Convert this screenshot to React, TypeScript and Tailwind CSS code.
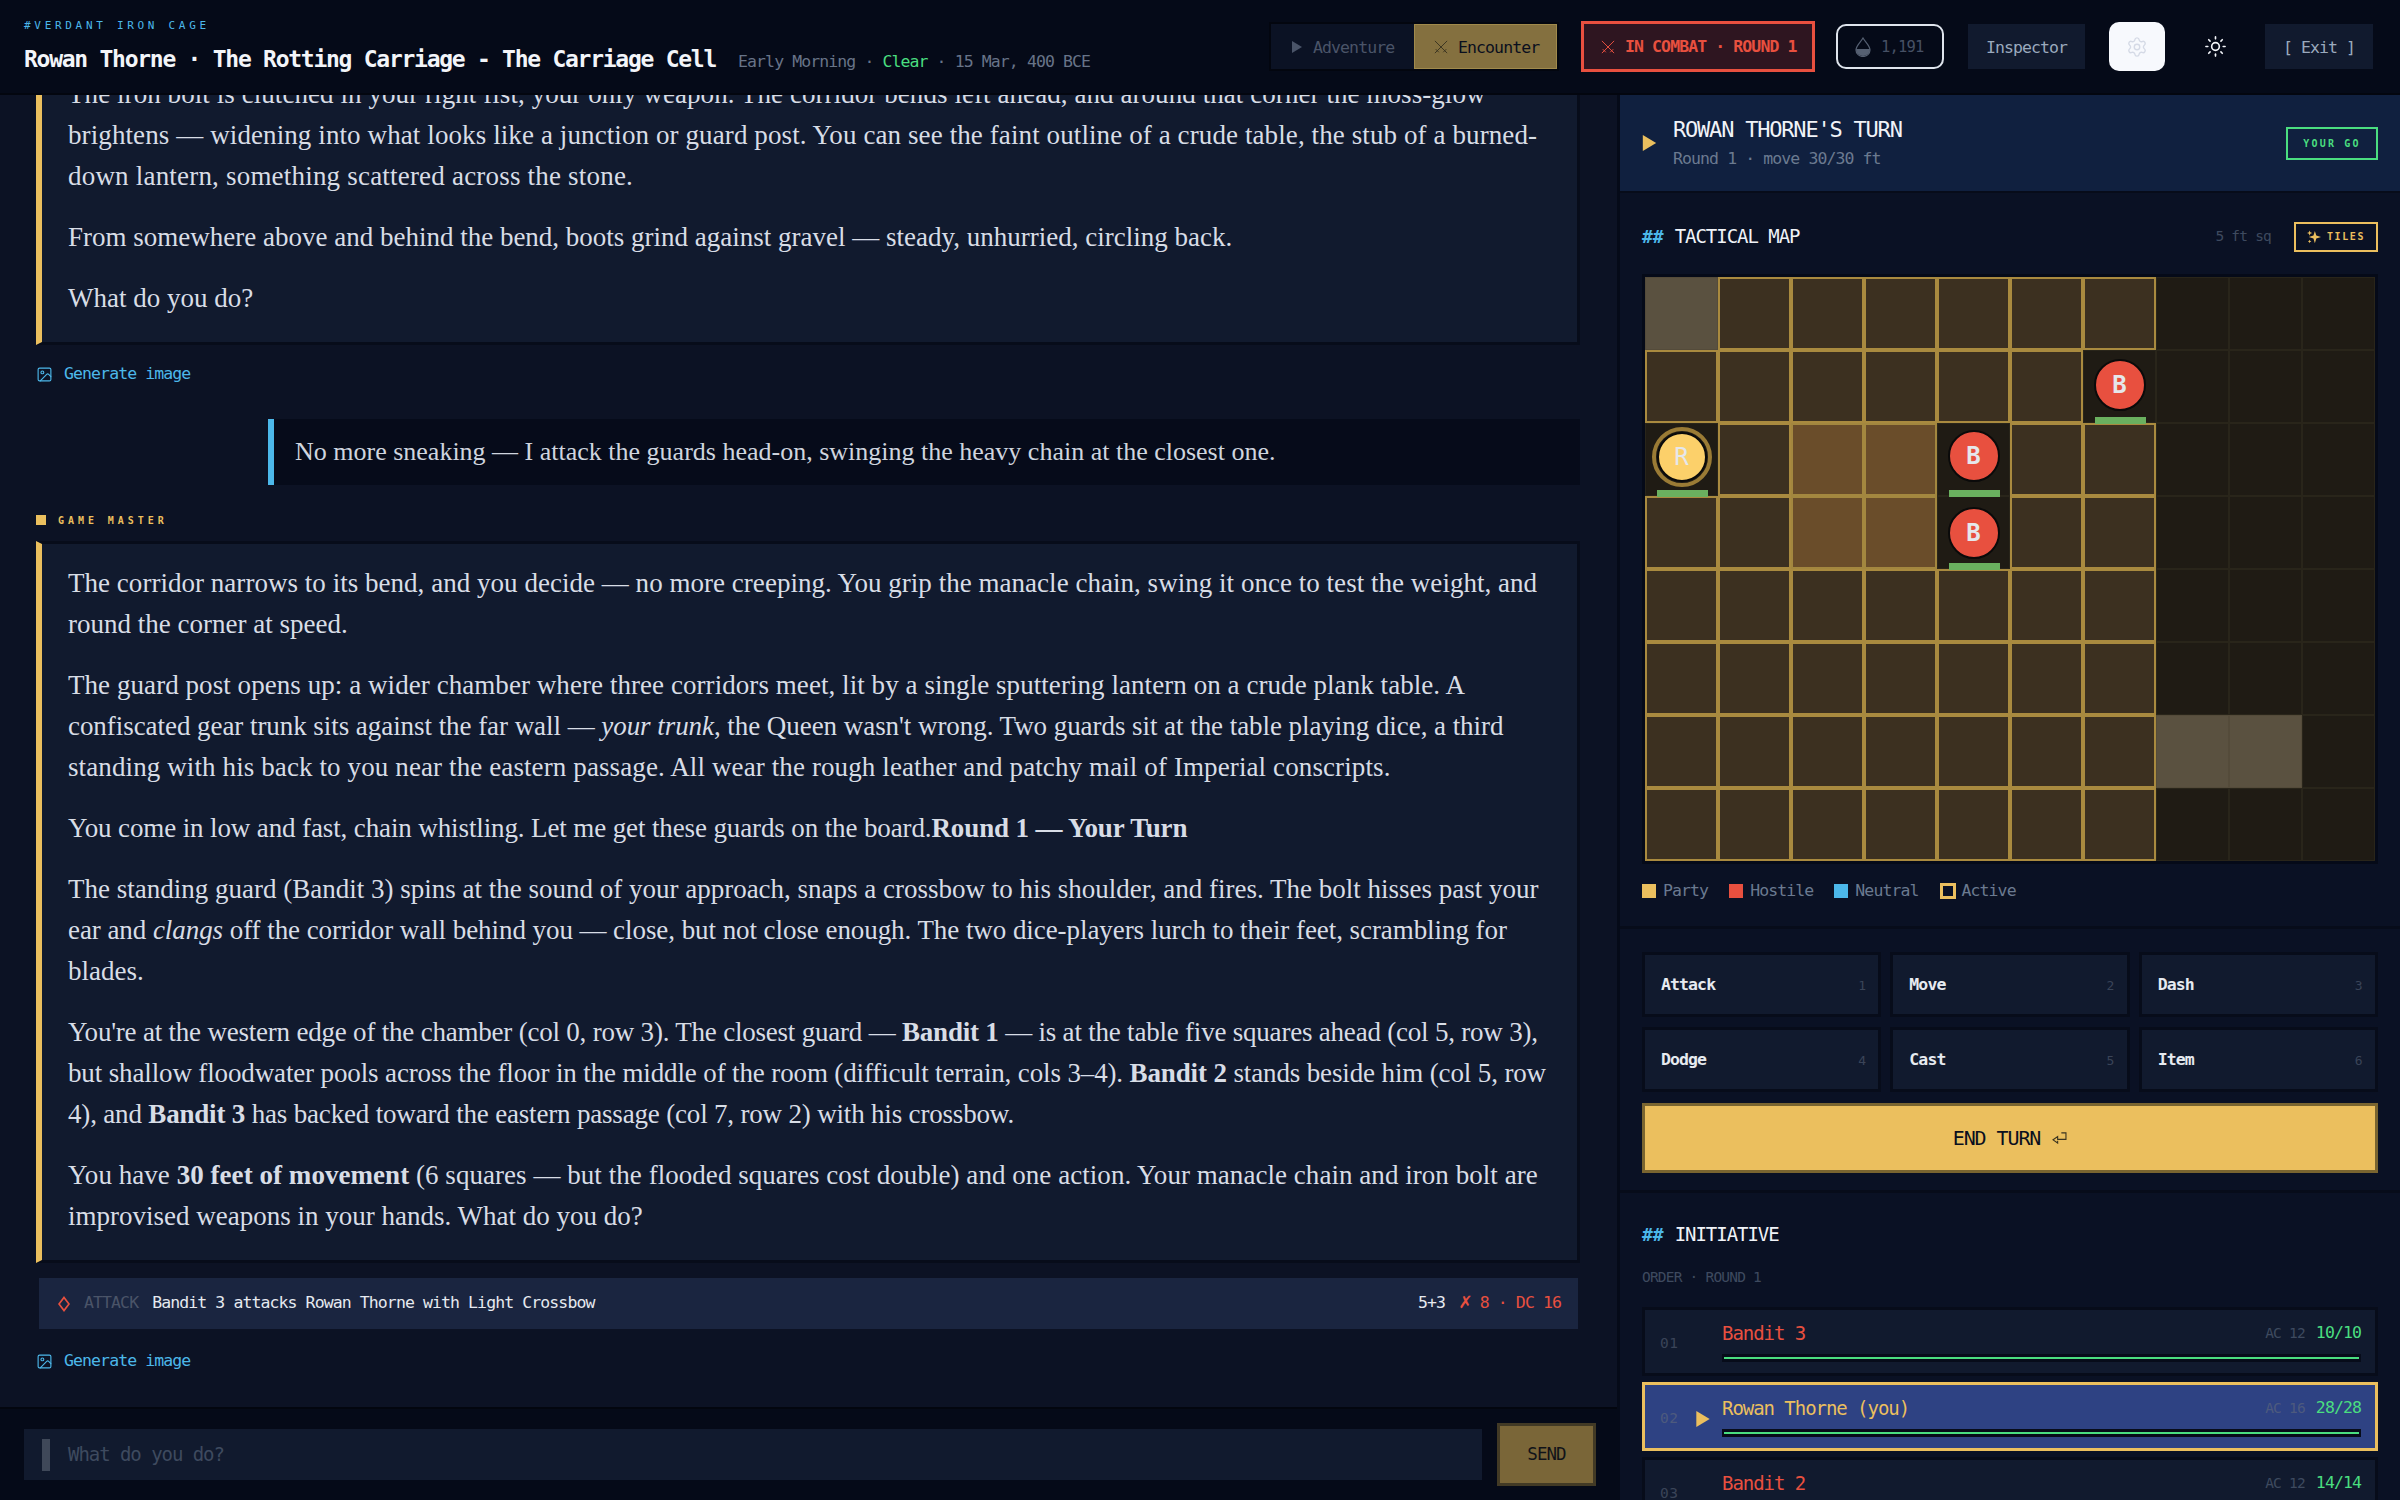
import { Settings, Sun, Image as ImageIcon } from "lucide-react";

const MONO = "[font-family:'DejaVu_Sans_Mono','Liberation_Mono',monospace]";

function Tri({ className }: { className: string }) {
  return (
    <svg viewBox="0 0 10 12" className={className} fill="currentColor">
      <path d="M0 0 L10 6 L0 12 Z" />
    </svg>
  );
}

function CrossedBlades({ className }: { className: string }) {
  return (
    <svg viewBox="0 0 16 16" className={className} fill="none" stroke="currentColor" strokeWidth="1.1">
      <path d="M1 1 L15 15 M15 1 L1 15 M2 10.5 L5.5 14 M14 10.5 L10.5 14" />
    </svg>
  );
}

function GenerateImage() {
  return (
    <button className="flex items-center gap-[11px] text-[#4cb8ea] text-[16.5px] tracking-[-0.055em] leading-[20px] self-start">
      <ImageIcon size={17} strokeWidth={1.6} />
      <span>Generate image</span>
    </button>
  );
}

function Header() {
  return (
    <header className="h-[95px] shrink-0 bg-[#050a18] border-b-[2px] border-[#03060f] flex items-center justify-between pl-[24px] pr-[27px]">
      <div className="flex flex-col pt-[6px]">
        <div className="text-[11px] leading-[14px] tracking-[3.7px] text-[#4cb8ea] mb-[12px] mt-[-5px]">#VERDANT IRON CAGE</div>
        <div className="flex items-baseline gap-[22px]">
          <span className="text-[23px] tracking-[-0.055em] leading-[28px] font-bold text-[#f3f5f9]">Rowan Thorne · The Rotting Carriage - The Carriage Cell</span>
          <span className="text-[16.5px] tracking-[-0.055em] text-[#687488]">
            Early Morning · <span className="text-[#4ade80]">Clear</span> · 15 Mar, 400 BCE
          </span>
        </div>
      </div>
      <div className="flex items-center">
        <div className="flex h-[49px] w-[290px] border-[2px] border-[#03060f] bg-[#03060f]">
          <div className="w-[143px] bg-[#0b1224] text-[#4a5468] text-[16.5px] tracking-[-0.055em] flex items-center pl-[21px] gap-[11px]">
            <Tri className="w-[10px] h-[12px]" />
            <span className="pt-[3px]">Adventure</span>
          </div>
          <div className="w-[143px] bg-[#84703f] border border-[#a08a4c] text-[#0a0f1e] text-[16.5px] tracking-[-0.055em] flex items-center pl-[19px] gap-[10px]">
            <CrossedBlades className="w-[14px] h-[14px] text-[#3a3420]" />
            <span className="pt-[3px]">Encounter</span>
          </div>
        </div>
        <div className="ml-[22px] h-[51px] w-[234px] border-[3px] border-[#e8503f] bg-[#2e1520] text-[#e8503f] text-[16.5px] tracking-[-0.055em] font-bold flex items-center pl-[17px] gap-[10px]">
          <CrossedBlades className="w-[14px] h-[14px]" />
          <span className="pt-[2px]">IN COMBAT · ROUND 1</span>
        </div>
        <div className="ml-[21px] h-[45px] w-[108px] border-[2px] border-[#dfe4ec] rounded-[10px] flex items-center pl-[17px] gap-[10px] text-[#465064] text-[15.5px] tracking-[-0.055em]">
          <svg viewBox="0 0 16 20" className="w-[16px] h-[20px]">
            <path d="M8 1 C11 6 15 9 15 13 A7 6.5 0 0 1 1 13 C1 9 5 6 8 1 Z" fill="none" stroke="#566072" strokeWidth="1.2" />
            <path d="M1 12 H15 A7 7 0 0 1 1 12 Z" fill="#566072" />
          </svg>
          <span className="pt-[2px]">1,191</span>
        </div>
        <div className="ml-[24px] h-[45px] w-[117px] pt-[3px] bg-[#111a2e] text-[#9aa9bd] text-[16.5px] tracking-[-0.055em] flex items-center justify-center">Inspector</div>
        <div className="ml-[24px] h-[49px] w-[56px] bg-[#f7f9fd] rounded-[10px] flex items-center justify-center">
          <Settings size={22} strokeWidth={1.5} className="text-[#d5dae6]" />
        </div>
        <div className="ml-[38px] w-[24px] flex items-center justify-center">
          <Sun size={23} strokeWidth={1.7} className="text-[#f3f5f9]" />
        </div>
        <div className="ml-[38px] h-[45px] w-[108px] pt-[3px] bg-[#111a2e] text-[#9aa9bd] text-[16.5px] tracking-[-0.055em] flex items-center justify-center">[ Exit ]</div>
      </div>
    </header>
  );
}

function P({ children }: { children: React.ReactNode }) {
  return <p className="mb-[20px] last:mb-0">{children}</p>;
}

function GmCard({ children }: { children: React.ReactNode }) {
  return (
    <div className="shrink-0 [font-family:'Liberation_Serif',serif] text-[27px] leading-[41px] w-[1544px] bg-[#111a2e] border-l-[6px] border-l-[#ebbf5e] border-y-[3px] border-r-[3px] border-y-[#070c1a] border-r-[#070c1a] pl-[26px] pr-[10px] pt-[19px] pb-[23px] text-[#d8dde6]">
      {children}
    </div>
  );
}

function Chat() {
  return (
    <div className="flex-1 min-h-0 overflow-hidden flex flex-col justify-end pl-[36px] pr-[37px] bg-[#0c1224] pb-[36px]">
      <GmCard>
        <P>
          <span className="tracking-[0.07px]">The iron bolt is clutched in your right fist, your only weapon. The corridor bends left ahead, and around that corner the moss-glow</span><br />
          <span className="tracking-[0.1px]">brightens — widening into what looks like a junction or guard post. You can see the faint outline of a crude table, the stub of a burned-</span><br />
          <span className="tracking-[0.2px]">down lantern, something scattered across the stone.</span>
        </P>
        <P>From somewhere above and behind the bend, boots grind against gravel — steady, unhurried, circling back.</P>
        <P>What do you do?</P>
      </GmCard>
      <div className="shrink-0 mt-[19px] h-[20px] flex">
        <GenerateImage />
      </div>
      <div className="shrink-0 [font-family:'Liberation_Serif',serif] text-[26px] leading-[41px] mt-[35px] ml-[232px] h-[66px] pb-[2px] bg-[#060b1a] border-l-[6px] border-l-[#4cb8ea] pl-[21px] flex items-center text-[#cfd5df]">
        No more sneaking — I attack the guards head-on, swinging the heavy chain at the closest one.
      </div>
      <div className="shrink-0 mt-[29px] h-[12px] flex items-center gap-[12px]">
        <span className="w-[10px] h-[10px] bg-[#ebbf5e]" />
        <span className="text-[10px] font-bold tracking-[3.95px] text-[#ebbf5e]">GAME MASTER</span>
      </div>
      <div className="shrink-0 h-[15px]" />
      <GmCard>
        <P>
          <span className="tracking-[0.03px]">The corridor narrows to its bend, and you decide — no more creeping. You grip the manacle chain, swing it once to test the weight, and</span><br />
          round the corner at speed.
        </P>
        <P>
          <span className="tracking-[0.06px]">The guard post opens up: a wider chamber where three corridors meet, lit by a single sputtering lantern on a crude plank table. A</span><br />
          <span className="tracking-[-0.055px]">confiscated gear trunk sits against the far wall — <em>your trunk</em>, the Queen wasn't wrong. Two guards sit at the table playing dice, a third</span><br />
          <span className="tracking-[0.11px]">standing with his back to you near the eastern passage. All wear the rough leather and patchy mail of Imperial conscripts.</span>
        </P>
        <P>
          <span className="tracking-[-0.12px]">You come in low and fast, chain whistling. Let me get these guards on the board.<b>Round 1 — Your Turn</b></span>
        </P>
        <P>
          The standing guard (Bandit 3) spins at the sound of your approach, snaps a crossbow to his shoulder, and fires. The bolt hisses past your<br />
          <span className="tracking-[-0.065px]">ear and <em>clangs</em> off the corridor wall behind you — close, but not close enough. The two dice-players lurch to their feet, scrambling for</span><br />
          blades.
        </P>
        <P>
          <span className="tracking-[-0.21px]">You're at the western edge of the chamber (col 0, row 3). The closest guard — <b>Bandit 1</b> — is at the table five squares ahead (col 5, row 3),</span><br />
          <span className="tracking-[-0.135px]">but shallow floodwater pools across the floor in the middle of the room (difficult terrain, cols 3–4). <b>Bandit 2</b> stands beside him (col 5, row</span><br />
          <span className="tracking-[-0.18px]">4), and <b>Bandit 3</b> has backed toward the eastern passage (col 7, row 2) with his crossbow.</span>
        </P>
        <P>
          <span className="tracking-[0.045px]">You have <b>30 feet of movement</b> (6 squares — but the flooded squares cost double) and one action. Your manacle chain and iron bolt are</span><br />
          improvised weapons in your hands. What do you do?
        </P>
      </GmCard>
      <div className="shrink-0 mt-[15px] ml-[3px] w-[1539px] h-[51px] bg-[#1a2540] flex items-center pl-[19px] pr-[17px] text-[16.5px] tracking-[-0.055em]">
        <svg viewBox="0 0 12 16" className="w-[12px] h-[16px] mr-[14px]" fill="none" stroke="#e8503f" strokeWidth="1.7">
          <path d="M6 1.5 L11 8 L6 14.5 L1 8 Z" />
        </svg>
        <span className="text-[#4a5468] mr-[14px]">ATTACK</span>
        <span className="text-[#e6eaf0]">Bandit 3 attacks Rowan Thorne with Light Crossbow</span>
        <span className="ml-auto text-[#e6eaf0]">5+3</span>
        <span className="ml-[14px] text-[#e8503f]"><span className="text-[21px] leading-[20px]">✗</span> 8 · DC 16</span>
      </div>
      <div className="shrink-0 mt-[22px] h-[20px] flex">
        <GenerateImage />
      </div>
    </div>
  );
}

function InputBar() {
  return (
    <div className="h-[93px] shrink-0 bg-[#050a18] border-t-[2px] border-[#03060f] flex items-center pl-[24px] pr-[21px]">
      <div className="w-[1458px] h-[51px] bg-[#111a2e] flex items-center pl-[18px] gap-[18px]">
        <span className="w-[8px] h-[32px] bg-[#3f4859]" />
        <span className="text-[19px] tracking-[-0.055em] text-[#3e4a5f]">What do you do?</span>
      </div>
      <button className="ml-auto w-[99px] h-[63px] bg-[#7a6638] border-[3px] border-[#423a25] text-[#111319] text-[17.5px] tracking-[-0.055em] flex items-center justify-center">SEND</button>
    </div>
  );
}

const TOKENS: Record<string, { letter: string; party?: boolean; offset: string }> = {
  "1-6": { letter: "B", offset: "pb-[4px]" },
  "2-0": { letter: "R", party: true, offset: "pb-[6px]" },
  "2-4": { letter: "B", offset: "pb-[8px]" },
  "3-4": { letter: "B", offset: "pb-0" },
};

function Cell({ r, c }: { r: number; c: number }) {
  const key = `${r}-${c}`;
  const token = TOKENS[key];
  const obstacle = key === "0-0" || key === "6-7" || key === "6-8";
  const flood = (r === 2 || r === 3) && (c === 2 || c === 3);
  const reach = c < 7 && !token && !obstacle;
  let cls = "bg-[#1f1b14] border border-[#29251a]";
  if (obstacle) cls = "bg-[#5a5140] border border-[#544b3a]";
  else if (flood) cls = "bg-[#6a4d2a] border-[2px] border-[#a3873f]";
  else if (reach) cls = "bg-[#3c3020] border-[2px] border-[#a98a3f]";
  return (
    <div className={`relative h-[73px] ${cls}`}>
      {token && (
        <>
          <div className={`absolute inset-0 flex items-center justify-center ${token.offset}`}>
            {token.party ? (
              <div className="w-[50px] h-[50px] rounded-full bg-[#fcd06a] border-[2px] border-[#0a0a0a] outline-[4px] outline-[#9a7b35] outline-offset-[1px] flex items-center justify-center text-[#e5e7eb] text-[24px]">
                {token.letter}
              </div>
            ) : (
              <div className="w-[52px] h-[52px] rounded-full bg-[#e8503f] border-[2px] border-[#0a0a0a] flex items-center justify-center text-[#e5e7eb] font-bold text-[24px]">
                {token.letter}
              </div>
            )}
          </div>
          <div className="absolute z-10 left-[11px] w-[51px] bottom-[-2px] h-[7px] bg-[#6ab05f]" />
        </>
      )}
    </div>
  );
}

function Map() {
  const rows = Array.from({ length: 8 }, (_, i) => i);
  const cols = Array.from({ length: 10 }, (_, i) => i);
  return (
    <div className="border-[3px] border-[#050a18] grid grid-cols-10 bg-[#1f1b14]">
      {rows.flatMap((r) => cols.map((c) => <Cell key={`${r}-${c}`} r={r} c={c} />))}
    </div>
  );
}

function Legend() {
  return (
    <div className="flex items-center mt-[17px] text-[16.5px] tracking-[-0.055em] leading-[20px] text-[#6b7a90]">
      <span className="w-[14px] h-[14px] bg-[#ebbf5e] mr-[7px]" />
      <span>Party</span>
      <span className="w-[14px] h-[14px] bg-[#e8503f] ml-[21px] mr-[7px]" />
      <span>Hostile</span>
      <span className="w-[14px] h-[14px] bg-[#4cb8ea] ml-[21px] mr-[7px]" />
      <span>Neutral</span>
      <span className="w-[16px] h-[16px] border-[3px] border-[#ebbf5e] ml-[21px] mr-[6px]" />
      <span>Active</span>
    </div>
  );
}

function ActionBtn({ label, n }: { label: string; n: number }) {
  return (
    <button className="h-[65px] pt-[2px] bg-[#111a2e] border-[3px] border-[#070c1a] flex items-center justify-between pl-[16px] pr-[13px]">
      <span className="text-[16.5px] tracking-[-0.055em] font-bold text-[#e6eaf0]">{label}</span>
      <span className="text-[13px] tracking-[-0.055em] text-[#3a4458]">{n}</span>
    </button>
  );
}

function InitRow({ idx, name, ac, hp, active }: { idx: string; name: string; ac: number; hp: string; active?: boolean }) {
  return (
    <div className={`h-[69px] shrink-0 flex items-center pl-[15px] pr-[14px] ${active ? "bg-[#2e4283] border-[3px] border-[#ebbf5e]" : "bg-[#111a2e] border-[3px] border-[#070c1a]"}`}>
      <span className={`w-[36px] text-[14.5px] tracking-[0.5px] mt-[4px] ${active ? "text-[#4d5a7e]" : "text-[#3a4458]"}`}>{idx}</span>
      <span className="w-[26px] flex mt-[4px]">{active && <Tri className="w-[14px] h-[16px] text-[#ebbf5e]" />}</span>
      <div className="flex-1 min-w-0 flex flex-col">
        <div className="flex items-center justify-between h-[24px]">
          <span className={`text-[19px] tracking-[-0.055em] ${active ? "text-[#ebbf5e]" : "text-[#e8503f]"}`}>{name}</span>
          <span className="flex items-center gap-[11px] text-[14.5px] tracking-[-0.055em]">
            <span className={active ? "text-[#4d5a7e]" : "text-[#3e4a5f]"}>AC {ac}</span>
            <span className="text-[16.5px] tracking-[-0.055em] text-[#4ade80]">{hp}</span>
          </span>
        </div>
        <div className="mt-[8px] h-[8px] border-x-[2px] border-y-[3px] border-[#070c1a] bg-[#4ade80]" />
      </div>
    </div>
  );
}

function Panel() {
  return (
    <aside className="w-[780px] shrink-0 bg-[#0a1124] flex flex-col overflow-hidden">
      <div className="h-[98px] shrink-0 bg-[#10203f] border-b-[2px] border-[#070c1a] flex items-center pl-[22px] pr-[22px]">
        <Tri className="w-[15px] h-[16px] text-[#ebbf5e] mr-[16px]" />
        <div className="flex flex-col">
          <span className="text-[22px] tracking-[-0.055em] leading-[26px] text-[#f0f3f8]">ROWAN THORNE'S TURN</span>
          <span className="text-[16.5px] tracking-[-0.055em] leading-[20px] mt-[6px] text-[#6b7a90]">Round 1 · move 30/30 ft</span>
        </div>
        <div className="ml-auto w-[92px] h-[33px] border-[2px] border-[#4ade80] text-[#4ade80] text-[10px] font-bold tracking-[2.2px] flex items-center justify-center">YOUR GO</div>
      </div>
      <section className="h-[736px] shrink-0 px-[22px] border-b-[3px] border-[#070c1a] flex flex-col">
        <div className="h-[81px] shrink-0 flex items-center pt-[6px]">
          <span className="text-[#4cb8ea] text-[18px] font-bold mr-[11px]">##</span>
          <span className="text-[19px] tracking-[-0.055em] text-[#f0f3f8]">TACTICAL MAP</span>
          <span className="ml-auto text-[14.5px] tracking-[-0.055em] text-[#3e4a5f] mr-[23px]">5 ft sq</span>
          <div className="w-[84px] h-[30px] border-[2px] border-[#ebbf5e] text-[#ebbf5e] text-[10px] font-bold tracking-[1.6px] flex items-center justify-center gap-[6px]">
            <svg viewBox="0 0 16 16" className="w-[14px] h-[14px]" fill="currentColor">
              <path d="M9 1 L10.6 6.4 L16 8 L10.6 9.6 L9 15 L7.4 9.6 L2 8 L7.4 6.4 Z" />
              <path d="M3 0.5 L3.8 2.7 L6 3.5 L3.8 4.3 L3 6.5 L2.2 4.3 L0 3.5 L2.2 2.7 Z" />
              <path d="M3 11 L3.6 12.4 L5 13 L3.6 13.6 L3 15 L2.4 13.6 L1 13 L2.4 12.4 Z" />
            </svg>
            TILES
          </div>
        </div>
        <Map />
        <Legend />
      </section>
      <section className="h-[264px] shrink-0 px-[22px] pt-[23px] border-b-[3px] border-[#070c1a] flex flex-col">
        <div className="grid grid-cols-3 gap-x-[9px] gap-y-[10px]">
          <ActionBtn label="Attack" n={1} />
          <ActionBtn label="Move" n={2} />
          <ActionBtn label="Dash" n={3} />
          <ActionBtn label="Dodge" n={4} />
          <ActionBtn label="Cast" n={5} />
          <ActionBtn label="Item" n={6} />
        </div>
        <button className="mt-[11px] h-[70px] bg-[#ebbf5e] border-[3px] border-[#7a6530] text-[#0a0f1e] text-[20px] tracking-[-0.055em] flex items-center justify-center gap-[12px]">
          END TURN
          <svg viewBox="0 0 16 13" className="w-[15px] h-[12px]" fill="none" stroke="#3a3420" strokeWidth="1.2">
            <path d="M10 1 H15 V8 H6 V5 L1 8.5 L6 12 V9.5" />
          </svg>
        </button>
      </section>
      <section className="flex-1 min-h-0 px-[22px] flex flex-col">
        <div className="h-[78px] shrink-0 flex items-center pt-[5px]">
          <span className="text-[#4cb8ea] text-[18px] font-bold mr-[11px]">##</span>
          <span className="text-[19px] tracking-[-0.055em] text-[#f0f3f8]">INITIATIVE</span>
        </div>
        <div className="text-[14.5px] tracking-[-0.055em] leading-[16px] text-[#3e4a5f] mb-[22px] -mt-[2px]">ORDER · ROUND 1</div>
        <div className="flex flex-col gap-[6px]">
          <InitRow idx="01" name="Bandit 3" ac={12} hp="10/10" />
          <InitRow idx="02" name="Rowan Thorne (you)" ac={16} hp="28/28" active />
          <InitRow idx="03" name="Bandit 2" ac={12} hp="14/14" />
        </div>
      </section>
    </aside>
  );
}

export default function App() {
  return (
    <div className={`w-[2400px] h-[1500px] overflow-hidden flex flex-col bg-[#050a18] ${MONO}`}>
      <Header />
      <div className="flex-1 min-h-0 flex">
        <main className="w-[1620px] shrink-0 flex flex-col border-r-[3px] border-[#050a18]">
          <Chat />
          <InputBar />
        </main>
        <Panel />
      </div>
    </div>
  );
}
